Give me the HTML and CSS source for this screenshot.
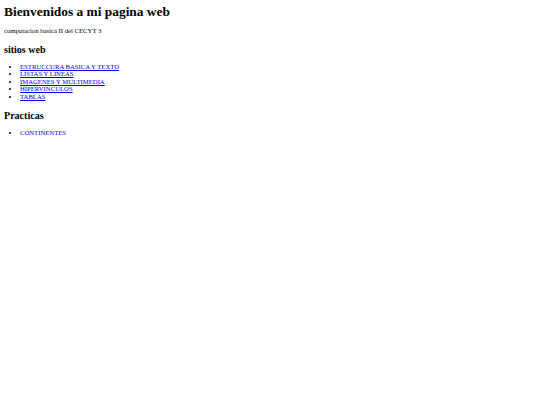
FILE: index.html
```html
<!DOCTYPE html>
<html>
<head>
<meta charset="utf-8">
<title>Bienvenidos</title>
<link rel="stylesheet" href="styles.css">
</head>
<body class="page">
<h1 class="title">Bienvenidos a mi pagina web</h1>
<p class="intro">computacion basica II del CECYT 3</p>
<h2 class="section">sitios web</h2>
<ul class="links">
<li><a href="#">ESTRUCCURA BASICA Y TEXTO</a></li>
<li><a href="#">LISTAS Y LINEAS</a></li>
<li><a href="#">IMAGENES Y MULTIMEDIA</a></li>
<li><a href="#">HIPERVINCULOS</a></li>
<li><a href="#">TABLAS</a></li>
</ul>
<h2 class="section">Practicas</h2>
<ul class="links">
<li><a href="#">CONTINENTES</a></li>
</ul>
</body>
</html>
```

FILE: styles.css
```css
html { background: #fff; }
.page {
  margin: 4px;
  font-family: "Liberation Serif", "Times New Roman", serif;
  font-size: 6.7px;
  line-height: 1.12;
  color: #000;
}
.title { font-size: 2em; margin: 0 0 8px; font-weight: bold; }
.intro { margin: 0; }
.section { font-size: 1.5em; margin: 9.6px 0 7.6px; font-weight: bold; }
.links { margin: 0; padding-left: 16px; list-style: disc; }
.links a {
  color: #0000ee;
  text-decoration: underline;
  text-decoration-thickness: 1px;
  text-underline-offset: 1px;
}
```
